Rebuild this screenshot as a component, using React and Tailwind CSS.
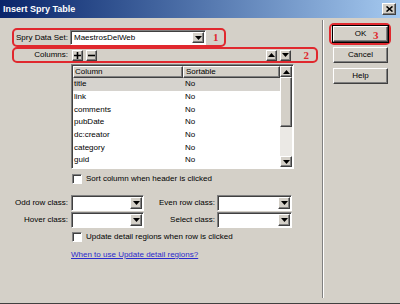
import React from "react";

/* ---------- WIN CLASSIC BITS ---------- */

const raised =
  "border border-t-white border-l-white border-b-[#404040] border-r-[#404040] shadow-[inset_-1px_-1px_#808080] bg-[#d4d0c8]";
const sunken =
  "border border-t-[#808080] border-l-[#808080] border-b-white border-r-white shadow-[inset_1px_1px_#404040]";

const Tri = ({ up = false }) => (
  <svg width="7" height="4" viewBox="0 0 7 4">
    <polygon points={up ? "3.5,0 7,4 0,4" : "0,0 7,0 3.5,4"} fill="#000" />
  </svg>
);

const Arrow = ({ up, className = "" }) => (
  <div className={`${raised} flex items-center justify-center ${className}`}>
    <Tri up={up} />
  </div>
);

const Combo = ({ className = "", children }) => (
  <div className={`${sunken} bg-white flex items-stretch p-[1px] ${className}`}>
    <div className="flex-1 flex items-center pl-[2px] pt-[1px]">{children}</div>
    <Arrow className="w-[12px]" />
  </div>
);

const Check = () => <div className={`${sunken} bg-white w-[10px] h-[10px]`} />;

const Num = ({ children, className = "" }) => (
  <span className={`font-['Liberation_Serif',serif] font-bold text-[11px] text-[#e0282e] leading-none ${className}`}>
    {children}
  </span>
);

const Btn = ({ children, className = "" }) => (
  <div className={`${raised} w-[55px] h-[16px] flex items-center justify-center ${className}`}>
    {children}
  </div>
);

const rows = ["title", "link", "comments", "pubDate", "dc:creator", "category", "guid"];

/* ---------- MAIN ---------- */

export default function App() {
  return (
    <div className="w-[400px] h-[304px] bg-[#d4d0c8] flex flex-col text-[8px] leading-none text-black font-['Liberation_Sans',Arial,sans-serif] border-b border-b-[#404040]">
      {/* title bar */}
      <div className="h-[18px] flex items-center px-[3px] bg-gradient-to-r from-[#0a246a] to-[#a6caf0]">
        <span className="text-white font-bold text-[9px] flex-1">Insert Spry Table</span>
        <div className={`${raised} w-[14px] h-[12px] mr-[1px] flex items-center justify-center`}>
          <svg width="7" height="6" viewBox="0 0 7 6">
            <path d="M0.5 0.5L6.5 5.5M6.5 0.5L0.5 5.5" stroke="#000" strokeWidth="1.6" />
          </svg>
        </div>
      </div>

      <div className="flex flex-1 mt-[2px] mb-[5px]">
        {/* left side */}
        <div className="w-[323px] border-r border-r-[#808080] flex flex-col">
          <div className="mt-[8px] ml-[12px] w-[214px] h-[19px] border-2 border-[#e0282e] rounded-[5px] flex items-center">
            <div className="w-[54px] text-right">Spry Data Set:</div>
            <Combo className="ml-[2px] w-[136px] h-[15px]">MaestrosDelWeb</Combo>
            <Num className="ml-[7px]">1</Num>
          </div>

          <div className="ml-[12px] w-[306px] h-[16px] border-2 border-[#e0282e] rounded-[5px] flex items-center">
            <div className="w-[54px] text-right">Columns:</div>
            <div className={`${raised} ml-[4px] w-[11px] h-[11px] flex items-center justify-center`}>
              <svg width="7" height="7" viewBox="0 0 7 7">
                <path d="M3.5 0V7M0 3.5H7" stroke="#000" strokeWidth="1.6" />
              </svg>
            </div>
            <div className={`${raised} ml-[3px] w-[11px] h-[11px] flex items-center justify-center`}>
              <svg width="7" height="7" viewBox="0 0 7 7">
                <path d="M0 3.5H7" stroke="#000" strokeWidth="1.6" />
              </svg>
            </div>
            <div className="flex-1" />
            <Arrow up className="w-[11px] h-[11px]" />
            <Arrow className="ml-[3px] w-[11px] h-[11px]" />
            <Num className="ml-[13px] mr-[7px]">2</Num>
          </div>

          {/* columns list */}
          <div className={`${sunken} bg-white mt-[1px] ml-[71px] w-[223px] h-[105px] flex p-[1px]`}>
            <div className="flex-1 flex flex-col">
              <div className="h-[12px] flex">
                <div className={`${raised} w-[110px] flex items-center pl-[1px]`}>Column</div>
                <div className={`${raised} flex-1 flex items-center pl-[2px]`}>Sortable</div>
              </div>
              {rows.map((r, i) => (
                <div
                  key={r}
                  className={`h-[12.7px] flex items-center ${i === 0 ? "bg-[#d6d3ce]" : ""}`}
                >
                  <div className="w-[110px] pl-[1px]">{r}</div>
                  <div className="pl-[2px]">No</div>
                </div>
              ))}
            </div>
            <div className="w-[12px] flex flex-col bg-[#ebe9e5]">
              <Arrow up className="h-[11px]" />
              <div className={`${raised} h-[50px]`} />
              <div className="flex-1" />
              <Arrow className="h-[11px]" />
            </div>
          </div>

          <div className="mt-[5px] ml-[72px] h-[10px] flex items-center">
            <Check />
            <span className="ml-[4px]">Sort column when header is clicked</span>
          </div>

          <div className="mt-[11px] h-[16px] flex items-center">
            <div className="w-[68px] text-right">Odd row class:</div>
            <Combo className="ml-[3px] w-[73px] h-[16px]" />
            <div className="w-[71px] text-right">Even row class:</div>
            <Combo className="ml-[2px] w-[75px] h-[16px]" />
          </div>
          <div className="mt-[1px] h-[16px] flex items-center">
            <div className="w-[68px] text-right">Hover class:</div>
            <Combo className="ml-[3px] w-[73px] h-[16px]" />
            <div className="w-[71px] text-right">Select class:</div>
            <Combo className="ml-[2px] w-[75px] h-[16px]" />
          </div>

          <div className="mt-[4px] ml-[72px] h-[10px] flex items-center">
            <Check />
            <span className="ml-[4px]">Update detail regions when row is clicked</span>
          </div>

          <div className="mt-[9px] ml-[71px]">
            <span className="text-[#2a2acc] underline">When to use Update detail regions?</span>
          </div>
        </div>

        {/* right side */}
        <div className="flex-1 border-l border-l-white flex flex-col">
          <div className="relative mt-[3px] ml-[5px] w-[62px] h-[22px] border-2 border-[#e0282e] rounded-[5px] flex items-center pl-[2px]">
            <Btn className="border-[#000] outline outline-1 outline-black">OK</Btn>
            <Num className="absolute left-[42px] top-[5px]">3</Num>
          </div>
          <Btn className="mt-[2px] ml-[9px]">Cancel</Btn>
          <Btn className="mt-[5px] ml-[9px]">Help</Btn>
        </div>
      </div>
    </div>
  );
}
